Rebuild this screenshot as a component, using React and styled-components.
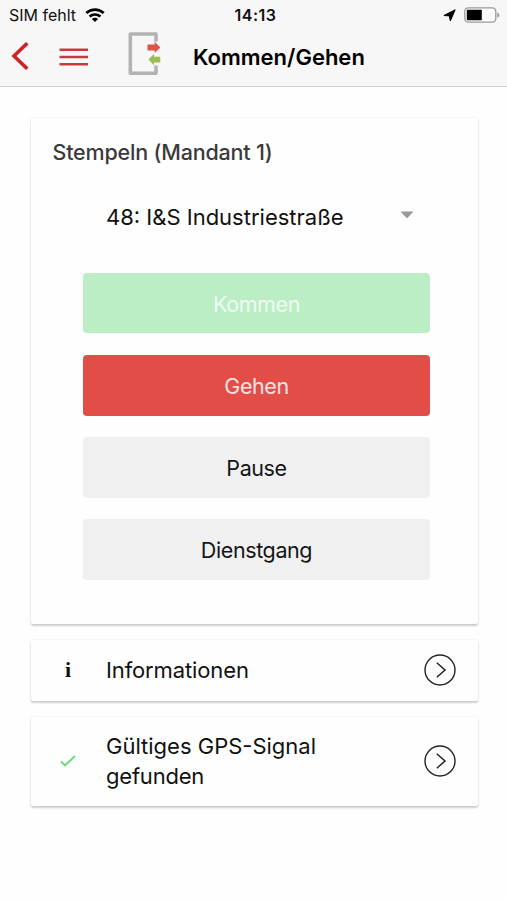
import React from "react";
import styled, { createGlobalStyle } from "styled-components";

const GlobalStyle = createGlobalStyle`
  * { box-sizing: border-box; }
  body { margin: 0; background: #fefefe; font-family: Inter, "Liberation Sans", sans-serif; color: #111; }
`;

const Screen = styled.div`
  width: 507px;
  height: 900px;
  overflow: hidden;
  background: #fefefe;
`;

const TopBar = styled.header`
  height: 87px;
  background: #f7f7f7;
  border-bottom: 1px solid #d2d2d2;
`;

const StatusBar = styled.div`
  display: grid;
  grid-template-columns: 1fr auto 1fr;
  align-items: center;
  height: 30px;
  padding: 0 7px 0 9px;
`;

const StatusGroup = styled.div`
  display: flex;
  align-items: center;
  justify-content: ${(p) => (p.$end ? "flex-end" : "flex-start")};
  gap: ${(p) => (p.$end ? 8 : 9)}px;
`;

const StatusText = styled.span`
  font-size: 16px;
  line-height: 20px;
  font-weight: ${(p) => (p.$strong ? 600 : 400)};
  letter-spacing: ${(p) => p.$track || 0}px;
  padding-left: ${(p) => (p.$strong ? 2 : 0)}px;
`;

const NavBar = styled.nav`
  display: flex;
  align-items: flex-start;
  height: 56px;
  padding-left: 11px;
`;

const NavIcon = styled.svg`
  display: block;
  flex: none;
  margin-top: ${(p) => p.$top}px;
  margin-right: ${(p) => p.$after}px;
`;

const Title = styled.h1`
  margin: 13px 0 0;
  font-size: 22px;
  line-height: 28px;
  font-weight: 600;
  color: #000;
`;

const Content = styled.main`
  display: flex;
  flex-direction: column;
  gap: 16px;
  padding: 31px 29px 0 31px;
`;

const Card = styled.section`
  background: #fefefe;
  border-radius: 2px;
  box-shadow: 0 2px 2px rgba(0, 0, 0, 0.18), 0 0 2px rgba(0, 0, 0, 0.11);
`;

const StampCard = styled(Card)`
  height: 506px;
  padding: 20px 48px 0 52px;
`;

const CardTitle = styled.h2`
  margin: 0 0 0 -30.5px;
  font-size: 21.5px;
  line-height: 28px;
  font-weight: 500;
  color: #3a3a3c;
  letter-spacing: -0.2px;
`;

const Select = styled.div`
  display: flex;
  align-items: center;
  justify-content: space-between;
  height: 60px;
  margin-top: 21px;
  padding: 0 16px 0 23px;
`;

const Text = styled.span`
  font-size: 22px;
  line-height: 30px;
  letter-spacing: ${(p) => p.$track || 0}px;
`;

const Caret = styled.svg`
  display: block;
  margin-bottom: 5px;
`;

const Buttons = styled.div`
  display: flex;
  flex-direction: column;
  gap: 21.5px;
  margin-top: 25.7px;
`;

const tones = {
  green: ["#bbeec5", "#effbf1"],
  red: ["#e24d47", "#fbe4e3"],
  grey: ["#f0f0f0", "#151515"],
};

const Button = styled.button`
  height: 60.7px;
  padding: 1px 0 0;
  border: 0;
  border-radius: 4px;
  background: ${(p) => tones[p.$tone][0]};
  color: ${(p) => tones[p.$tone][1]};
  font-family: inherit;
  font-size: 21.5px;
  letter-spacing: -0.4px;
`;

const RowCard = styled(Card)`
  display: grid;
  grid-template-columns: 75px 1fr 32px;
  align-items: center;
  height: ${(p) => p.$height}px;
  padding-right: 22px;
`;

const RowIcon = styled.div`
  display: flex;
  justify-content: center;
  padding-right: 1px;
`;

const InfoGlyph = styled.span`
  font-family: "Liberation Serif", serif;
  font-weight: 700;
  font-size: 22px;
  line-height: 24px;
`;

const Lines = styled.div`
  display: flex;
  flex-direction: column;
  align-items: flex-start;
`;

function Wifi() {
  return (
    <svg width="20" height="15" viewBox="0 0 20 15">
      <g fill="none" stroke="#000" strokeWidth="2.7">
        <path d="M1.3 5.1C6.2.5 13.8.5 18.7 5.1" />
        <path d="M4.6 8.6C7.7 5.8 12.3 5.8 15.4 8.6" />
      </g>
      <path d="M6.9 10.9C8.7 9.3 11.3 9.3 13.1 10.9L10 14Z" />
    </svg>
  );
}

function RoundChevron() {
  return (
    <svg width="32" height="32" viewBox="0 0 32 32" fill="none" stroke="#222" strokeWidth="1.4">
      <circle cx="16" cy="16" r="15" />
      <path d="M12.8 8.8L21 16L12.8 23.2" strokeWidth="1.5" />
    </svg>
  );
}

export default function App() {
  return (
    <Screen>
      <GlobalStyle />
      <TopBar>
        <StatusBar>
          <StatusGroup>
            <StatusText>SIM fehlt</StatusText>
            <Wifi />
          </StatusGroup>
          <StatusText $strong $track={0.5}>14:13</StatusText>
          <StatusGroup $end>
            <svg width="13" height="13" viewBox="0 0 13 13">
              <path d="M12.2 .8L7.3 12L6.4 6.9L.9 6.5Z" stroke="#000" strokeWidth="1" strokeLinejoin="round" />
            </svg>
            <svg width="36" height="16" viewBox="0 0 36 16">
              <rect x=".8" y=".8" width="31" height="14.4" rx="3.6" fill="#fcfcfc" stroke="#999" strokeWidth="1.3" />
              <rect x="2.8" y="2.8" width="15" height="10.4" rx=".8" />
              <path d="M33.3 5.4C36 6.3 36 9.7 33.3 10.6Z" fill="#999" />
            </svg>
          </StatusGroup>
        </StatusBar>
        <NavBar>
          <NavIcon $top={12} $after={30} width="18" height="28" viewBox="0 0 18 28">
            <path d="M16.3 1.2L3 14L16.3 26.8" fill="none" stroke="#c9252b" strokeWidth="3.6" />
          </NavIcon>
          <NavIcon $top={18} $after={39} width="30" height="18" viewBox="0 0 30 18">
            <path d="M.5 1.8H29M.5 9H29M.5 16.2H29" stroke="#c93a3d" strokeWidth="2.4" />
          </NavIcon>
          <NavIcon $top={2} $after={32} width="33" height="44" viewBox="0 0 33 44">
            <path d="M28 9.5V2H2.3V41.2H28V33.5" fill="none" stroke="#b3b3b3" strokeWidth="3.6" strokeLinejoin="round" />
            <path d="M19.5 12.4H26.7V9.8L32.3 15.4L26.7 21V18.4H19.5Z" fill="#dc5348" />
            <path d="M32.3 24.8H26V22L20.4 27.6L26 33.2V30.6H32.3Z" fill="#9dbc55" />
          </NavIcon>
          <Title>Kommen/Gehen</Title>
        </NavBar>
      </TopBar>
      <Content>
        <StampCard>
          <CardTitle>Stempeln (Mandant 1)</CardTitle>
          <Select>
            <Text>48: I&amp;S Industriestraße</Text>
            <Caret width="14" height="8" viewBox="0 0 14 8">
              <path d="M.5 .5H13.5L7 7.5Z" fill="#999" />
            </Caret>
          </Select>
          <Buttons>
            <Button $tone="green">Kommen</Button>
            <Button $tone="red">Gehen</Button>
            <Button $tone="grey">Pause</Button>
            <Button $tone="grey">Dienstgang</Button>
          </Buttons>
        </StampCard>
        <RowCard $height={60.5}>
          <RowIcon>
            <InfoGlyph>i</InfoGlyph>
          </RowIcon>
          <Text $track={-0.12}>Informationen</Text>
          <RoundChevron />
        </RowCard>
        <RowCard $height={89}>
          <RowIcon>
            <svg width="16" height="12" viewBox="0 0 16 12">
              <path d="M1 6.5L5 10.5L15 1" fill="none" stroke="#63d877" strokeWidth="1.8" />
            </svg>
          </RowIcon>
          <Lines>
            <Text>Gültiges GPS-Signal</Text>
            <Text $track={-0.2}>gefunden</Text>
          </Lines>
          <RoundChevron />
        </RowCard>
      </Content>
    </Screen>
  );
}
